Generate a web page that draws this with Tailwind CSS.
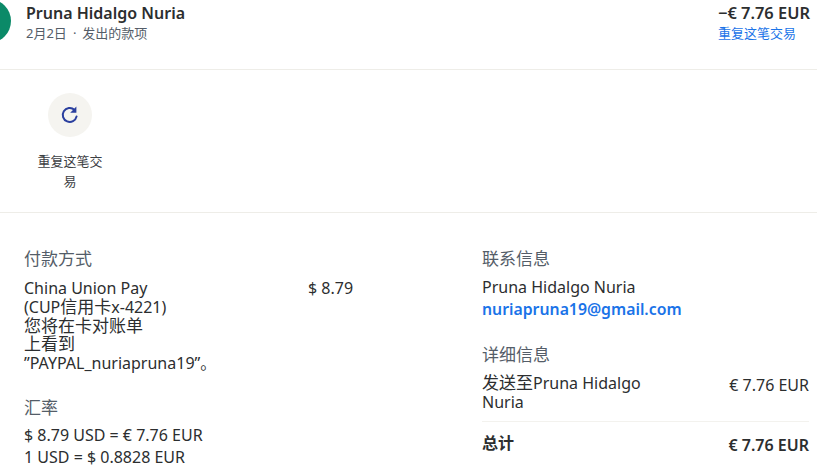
<!DOCTYPE html>
<html lang="zh">
<head>
    <meta charset="UTF-8">
    <title>交易详情</title>
    <script src="https://cdn.jsdelivr.net/npm/@tailwindcss/browser@4"></script>
</head>
<body class="w-[817px] h-[467px] overflow-hidden bg-white text-[#2c2e2f] text-[16px] leading-[18.75px] font-['Noto_Sans','Noto_Sans_CJK_SC',sans-serif]">
    <!-- header -->
    <div class="flex justify-between h-[70px] border-b border-[#eeede8]">
        <div class="flex items-start">
            <div class="w-[44px] h-[44px] rounded-full bg-[#0b8a68] ml-[-33px] mt-[-1px] shrink-0"></div>
            <div class="ml-[15px] mt-[3px]">
                <div class="text-[16px] leading-[20px] font-semibold">Pruna Hidalgo Nuria</div>
                <div class="text-[13px] leading-[18px] mt-[1px] text-[#545d68]">2月2日<span class="mx-[6px]">·</span>发出的款项</div>
            </div>
        </div>
        <div class="mr-[7px] mt-[3px] w-[92px] whitespace-nowrap">
            <div class="text-[16.4px] leading-[20px] font-semibold">−€ 7.76 EUR</div>
            <div class="text-[13px] leading-[18px] mt-[1px] text-[#1a73e8]">重复这笔交易</div>
        </div>
    </div>

    <!-- action -->
    <div class="h-[143px] border-b border-[#eeede8] pt-[23px] pl-[37px]">
        <div class="w-[66px] flex flex-col items-center">
            <div class="w-[44px] h-[44px] rounded-full bg-[#f5f4f0] flex items-center justify-center">
                <svg width="20" height="20" viewBox="0 0 20 20" fill="none">
                    <path d="M16.6 11.4A7 7 0 1 1 14.4 4.7" stroke="#2a3f9e" stroke-width="2" stroke-linecap="round"/>
                    <path d="M16.4 1.6v6.2h-6.2z" fill="#2a3f9e"/>
                </svg>
            </div>
            <div class="mt-[14px] text-[13px] leading-[20px] text-center text-[#3c4043]">重复这笔交易</div>
        </div>
    </div>

    <!-- details -->
    <div class="flex pt-[35px]">
        <div class="w-[482px] shrink-0 pl-[24px]">
            <div class="text-[17px] leading-[22px] text-[#545d68]">付款方式</div>
            <div class="flex mt-[9px]">
                <div class="w-[284px]">China Union Pay<br>(CUP<span class="text-[17px]">信用卡</span>x-4221)<br><span class="text-[17px]">您将在卡对账单</span><br><span class="text-[17px]">上看到</span><br>”PAYPAL_nuriapruna19”。</div>
                <div>$ 8.79</div>
            </div>
            <div class="mt-[24px] text-[17px] leading-[22px] text-[#545d68]">汇率</div>
            <div class="mt-[5px] leading-[22px]">$ 8.79 USD = € 7.76 EUR<br>1 USD = $ 0.8828 EUR</div>
        </div>
        <div class="w-[327px]">
            <div class="text-[17px] leading-[22px] text-[#545d68]">联系信息</div>
            <div class="mt-[6px] leading-[22px]">Pruna Hidalgo Nuria</div>
            <div class="leading-[22px] font-semibold text-[15.8px] text-[#1a73e8]">nuriapruna19@gmail.com</div>
            <div class="mt-[24px] text-[17px] leading-[22px] text-[#545d68]">详细信息</div>
            <div class="flex justify-between mt-[8px] pb-[9px] border-b border-[#f3f2ee]">
                <div class="w-[170px]"><span class="text-[17px]">发送至</span>Pruna Hidalgo Nuria</div>
                <div class="mt-[2px]">€ 7.76 EUR</div>
            </div>
            <div class="flex justify-between mt-[12px] font-semibold">
                <div>总计</div>
                <div class="mt-[2px]">€ 7.76 EUR</div>
            </div>
        </div>
    </div>
</body>
</html>
